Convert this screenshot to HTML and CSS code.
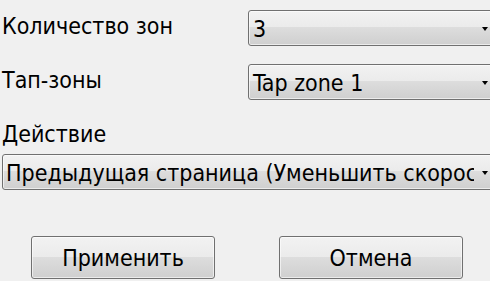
FILE: index.html
```html
<!DOCTYPE html>
<html lang="ru">
<head>
<meta charset="utf-8">
<title>Тап-зоны</title>
<link rel="stylesheet" href="styles.css">
</head>
<body>
<div class="form">
  <div class="row">
    <div class="label">Количество зон</div>
    <div class="combo combo-short">
      <span class="combo-text">3</span>
      <span class="arrow"></span>
    </div>
  </div>
  <div class="row">
    <div class="label">Тап-зоны</div>
    <div class="combo combo-short">
      <span class="combo-text">Tap zone 1</span>
      <span class="arrow"></span>
    </div>
  </div>
  <div class="label label-block">Действие</div>
  <div class="combo combo-wide">
    <span class="combo-text">Предыдущая страница (Уменьшить скорость)</span>
    <span class="arrow"></span>
  </div>
  <div class="buttons">
    <div class="button">Применить</div>
    <div class="button">Отмена</div>
  </div>
</div>
</body>
</html>
```
FILE: styles.css
```css
html, body {
  margin: 0;
  padding: 0;
  background: #f0f0f0;
  overflow: hidden;
}
body {
  width: 490px;
  height: 281px;
  font-family: "DejaVu Sans Condensed", "DejaVu Sans", sans-serif;
  font-size: 23px;
  color: #000;
}
.form {
  padding-top: 10px;
  display: flex;
  flex-direction: column;
}
.row {
  display: flex;
  height: 36px;
  margin-bottom: 18px;
}
.label {
  flex-shrink: 0;
  width: 246px;
  padding-left: 2px;
  line-height: 32px;
  white-space: nowrap;
}
.label-block {
  height: 32px;
  margin-bottom: 4px;
}
.combo {
  flex-shrink: 0;
  box-sizing: border-box;
  height: 36px;
  border: 1px solid #707070;
  border-radius: 3px;
  background: linear-gradient(to bottom, #f2f2f2 0%, #ebebeb 47%, #dddddd 48%, #cfcfcf 100%);
  box-shadow: inset 0 0 0 1px rgba(255,255,255,0.6);
  display: flex;
  align-items: flex-start;
  position: relative;
}
.combo-short {
  width: 250px;
}
.combo-wide {
  margin-left: 2px;
  width: 496px;
}
.combo-text {
  display: block;
  padding-top: 2px;
  line-height: 32px;
  white-space: nowrap;
  overflow: hidden;
}
.combo-short .combo-text {
  padding-left: 4px;
}
.combo-wide .combo-text {
  padding-left: 3px;
  width: 468px;
}
.arrow {
  position: absolute;
  left: 233px;
  top: 16px;
  width: 0;
  height: 0;
  border-left: 3.5px solid transparent;
  border-right: 3.5px solid transparent;
  border-top: 4px solid #000;
}
.combo-wide .arrow {
  left: 479px;
}
.buttons {
  display: flex;
  gap: 64px;
  margin-top: 46px;
  padding-left: 31px;
}
.button {
  flex-shrink: 0;
  box-sizing: border-box;
  width: 184px;
  height: 43px;
  border: 1px solid #707070;
  border-radius: 3px;
  background: linear-gradient(to bottom, #f2f2f2 0%, #ebebeb 49%, #dddddd 50%, #cfcfcf 100%);
  box-shadow: inset 0 0 0 1px rgba(255,255,255,0.6);
  display: flex;
  align-items: center;
  justify-content: center;
  line-height: 32px;
  padding-top: 1px;
}
```
